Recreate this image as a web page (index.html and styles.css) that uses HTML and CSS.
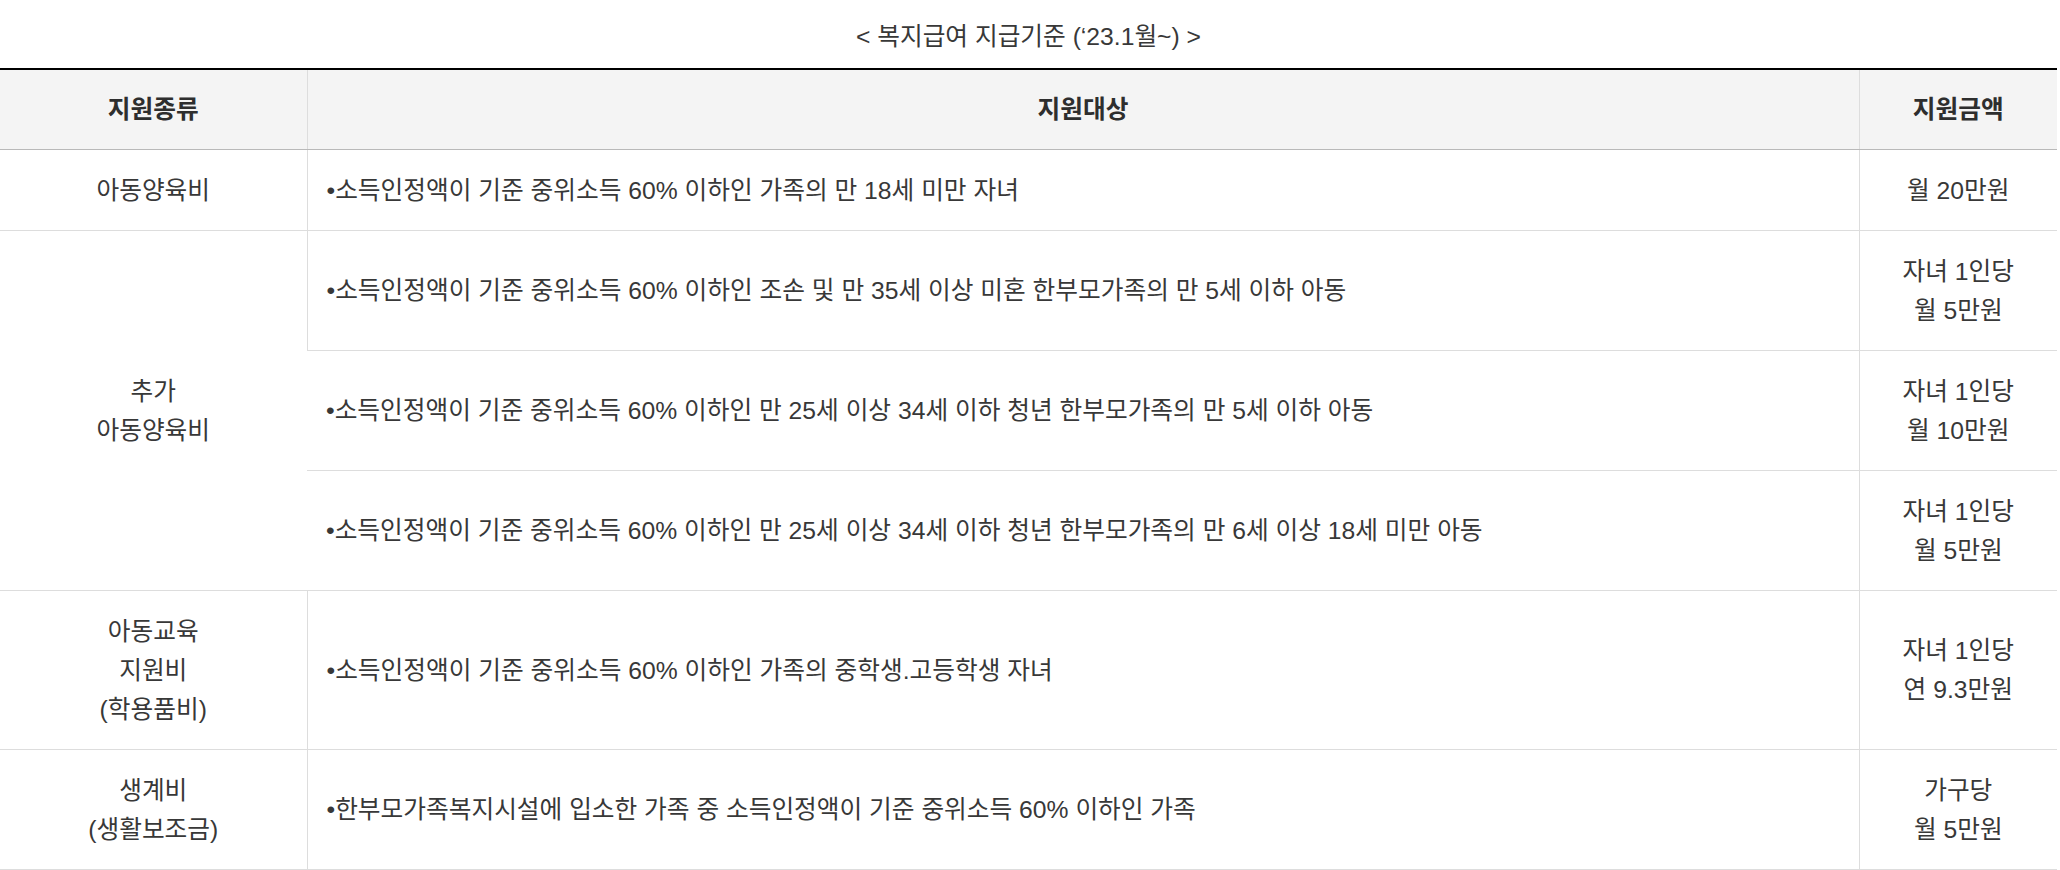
FILE: index.html
```html
<!DOCTYPE html>
<html lang="ko">
<head>
<meta charset="utf-8">
<title>복지급여 지급기준</title>
<link rel="stylesheet" href="styles.css">
</head>
<body>
<div class="page">
  <p class="caption">&lt; 복지급여 지급기준 (‘23.1월~) &gt;</p>
  <table class="benefit">
    <colgroup>
      <col class="c-type">
      <col class="c-target">
      <col class="c-amount">
    </colgroup>
    <thead>
      <tr>
        <th>지원종류</th>
        <th>지원대상</th>
        <th>지원금액</th>
      </tr>
    </thead>
    <tbody>
      <tr>
        <td class="center">아동양육비</td>
        <td class="left">•소득인정액이 기준 중위소득 60% 이하인 가족의 만 18세 미만 자녀</td>
        <td class="center">월 20만원</td>
      </tr>
      <tr>
        <td class="center" rowspan="3">추가<br>아동양육비</td>
        <td class="left">•소득인정액이 기준 중위소득 60% 이하인 조손 및 만 35세 이상 미혼 한부모가족의 만 5세 이하 아동</td>
        <td class="center">자녀 1인당<br>월 5만원</td>
      </tr>
      <tr>
        <td class="left">•소득인정액이 기준 중위소득 60% 이하인 만 25세 이상 34세 이하 청년 한부모가족의 만 5세 이하 아동</td>
        <td class="center">자녀 1인당<br>월 10만원</td>
      </tr>
      <tr>
        <td class="left">•소득인정액이 기준 중위소득 60% 이하인 만 25세 이상 34세 이하 청년 한부모가족의 만 6세 이상 18세 미만 아동</td>
        <td class="center">자녀 1인당<br>월 5만원</td>
      </tr>
      <tr>
        <td class="center">아동교육<br>지원비<br>(학용품비)</td>
        <td class="left">•소득인정액이 기준 중위소득 60% 이하인 가족의 중학생.고등학생 자녀</td>
        <td class="center">자녀 1인당<br>연 9.3만원</td>
      </tr>
      <tr>
        <td class="center">생계비<br>(생활보조금)</td>
        <td class="left">•한부모가족복지시설에 입소한 가족 중 소득인정액이 기준 중위소득 60% 이하인 가족</td>
        <td class="center">가구당<br>월 5만원</td>
      </tr>
    </tbody>
  </table>
</div>
</body>
</html>
```

FILE: styles.css
```css
html, body {
  margin: 0;
  padding: 0;
  background: #ffffff;
}

body {
  font-family: "Liberation Sans", "Noto Sans CJK KR", sans-serif;
  font-size: 24.7px;
  font-weight: 400;
  line-height: 39px;
  color: #383838;
}

.page {
  width: 2057px;
}

.caption {
  margin: 0;
  padding: 17px 0 11px;
  line-height: 40px;
  text-align: center;
}

.benefit {
  width: 100%;
  border-collapse: collapse;
  border-top: 2px solid #000000;
  table-layout: fixed;
}

.c-type { width: 307px; }
.c-amount { width: 198px; }

.benefit th {
  background: #f4f4f4;
  font-weight: bold;
  color: #2e2e2e;
  padding: 20px 10px 20px;
  border-left: 1px solid #dddddd;
  border-bottom: 1px solid #b9b9b9;
  text-align: center;
}

.benefit td {
  padding: 20.5px 10px 20.5px;
  border-left: 1px solid #dddddd;
  border-bottom: 1px solid #dddddd;
  vertical-align: middle;
}

.benefit tr > :first-child {
  border-left: none;
}

.benefit td.center { text-align: center; }
.benefit td.left { text-align: left; padding-left: 19px; }
```
